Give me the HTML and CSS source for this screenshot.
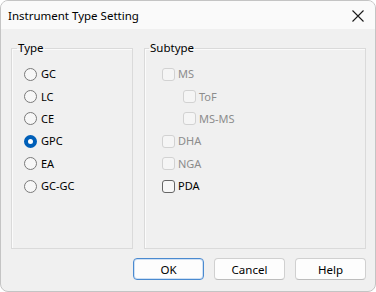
FILE: index.html
```html
<!DOCTYPE html>
<html lang="en">
<head>
    <meta charset="UTF-8">
    <title>Instrument Type Setting</title>
    <link rel="stylesheet" href="styles.css">
</head>
<body>
    <div class="window">
        <div class="titlebar">
            <span class="title">Instrument Type Setting</span>
            <svg class="close" width="12" height="12" viewBox="0 0 12 12">
                <path d="M0.5 0.5 L11.5 11.5 M11.5 0.5 L0.5 11.5" stroke="#1a1a1a" stroke-width="1.1" fill="none"/>
            </svg>
        </div>

        <div class="content">
            <div class="groups">
                <fieldset class="group type-group">
                    <legend>Type</legend>
                    <div class="option"><span class="radio"></span>GC</div>
                    <div class="option"><span class="radio"></span>LC</div>
                    <div class="option"><span class="radio"></span>CE</div>
                    <div class="option"><span class="radio checked"></span>GPC</div>
                    <div class="option"><span class="radio"></span>EA</div>
                    <div class="option"><span class="radio"></span>GC-GC</div>
                </fieldset>

                <fieldset class="group sub-group">
                    <legend>Subtype</legend>
                    <div class="option disabled"><span class="check"></span>MS</div>
                    <div class="option disabled indent"><span class="check"></span>ToF</div>
                    <div class="option disabled indent"><span class="check"></span>MS-MS</div>
                    <div class="option disabled"><span class="check"></span>DHA</div>
                    <div class="option disabled"><span class="check"></span>NGA</div>
                    <div class="option"><span class="check"></span>PDA</div>
                </fieldset>
            </div>

            <div class="buttons">
                <button class="btn default">OK</button>
                <button class="btn">Cancel</button>
                <button class="btn">Help</button>
            </div>
        </div>
    </div>
</body>
</html>
```

FILE: styles.css
```css
body {
    margin: 0;
    background: #ffffff;
    font-family: "Noto Sans", "Liberation Sans", sans-serif;
    font-size: 11px;
    color: #000;
}

.window {
    box-sizing: border-box;
    width: 376px;
    height: 292px;
    border: 1px solid #c4c4c4;
    border-radius: 8px;
    overflow: hidden;
    background: #f0f0f0;
    display: flex;
    flex-direction: column;
}

.titlebar {
    height: 28px;
    background: #fafafa;
    display: flex;
    align-items: center;
    justify-content: space-between;
    padding: 0 11px 0 7px;
}

.title {
    font-size: 11.5px;
    line-height: 16px;
    margin-top: 1px;
}

.close {
    display: block;
    margin-top: 1px;
}

.content {
    flex: 1;
    display: flex;
    flex-direction: column;
    padding: 11px 9px 0 10px;
}

.groups {
    display: flex;
    gap: 11px;
}

.group {
    margin: 0;
    padding: 7px 0 0 0;
    min-width: 0;
    height: 209px;
    box-sizing: border-box;
    border: 1px solid #dadada;
    box-shadow: inset 1px 1px 0 #fbfbfb;
}

.type-group {
    width: 122px;
    padding-left: 12px;
}

.sub-group {
    width: 222px;
    padding-left: 17px;
}

.group legend {
    font-size: 11.5px;
    line-height: 16px;
    padding: 0 1px;
}

.type-group legend {
    margin-left: -7px;
}

.sub-group legend {
    margin-left: -13px;
}

.option {
    height: 22.4px;
    display: flex;
    align-items: center;
    line-height: 16px;
}

.option.disabled {
    color: #8c8c8c;
}

.option.indent {
    padding-left: 21px;
}

.radio {
    box-sizing: border-box;
    width: 13px;
    height: 13px;
    border: 1px solid #7a7a7a;
    border-radius: 50%;
    background: #f7f7f7;
    margin-right: 4px;
}

.radio.checked {
    border: 4px solid #005fb8;
    background: #ffffff;
}

.check {
    box-sizing: border-box;
    width: 13px;
    height: 13px;
    border: 1px solid #666666;
    border-radius: 3px;
    background: #f7f7f7;
    margin-right: 3px;
}

.disabled .check {
    border-color: #d2d2d2;
    background: #f5f5f5;
}

.buttons {
    display: flex;
    justify-content: flex-end;
    gap: 10px;
    margin-top: 9px;
}

.btn {
    box-sizing: border-box;
    width: 71px;
    height: 22px;
    font-family: "Noto Sans", "Liberation Sans", sans-serif;
    font-size: 11.5px;
    color: #000;
    background: #fdfdfd;
    border: 1px solid #d0d0d0;
    border-bottom-color: #bdbdbd;
    border-radius: 4px;
    padding: 0;
}

.btn.default {
    border: 1px solid #4a8ad0;
    box-shadow: inset 0 0 0 1px #cfe0f3;
}
```
